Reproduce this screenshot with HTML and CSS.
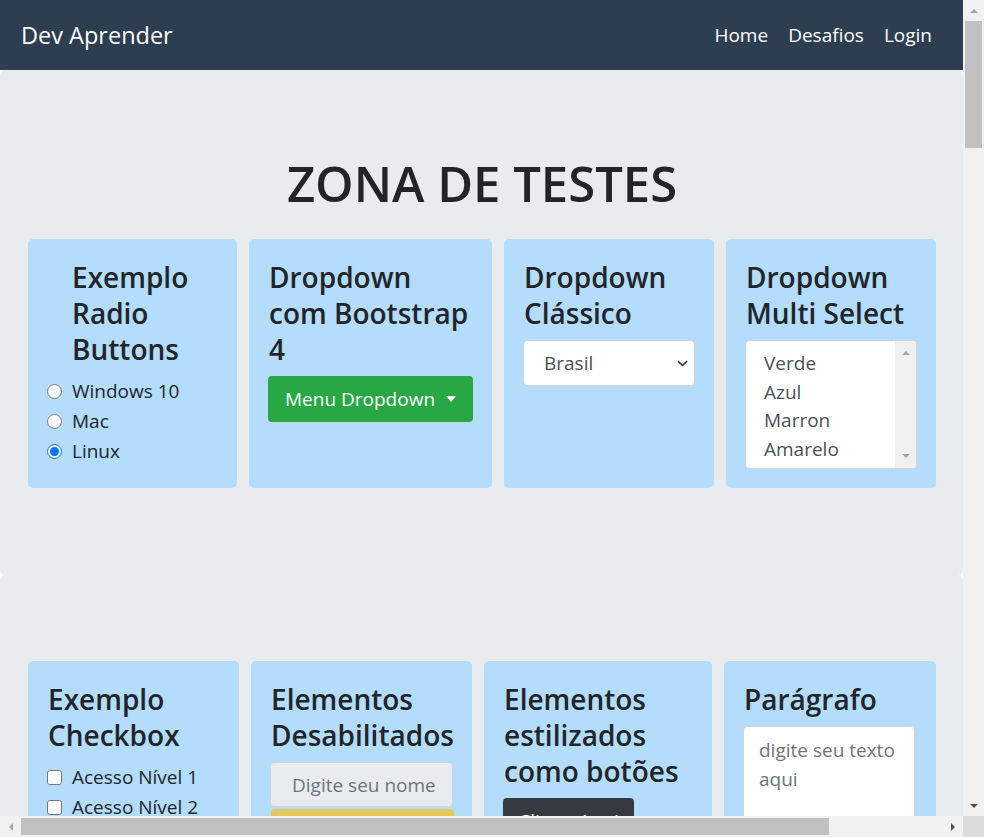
FILE: index.html
```html
<!DOCTYPE html>
<html lang="pt-BR">
<head>
<meta charset="utf-8">
<title>Dev Aprender - Zona de Testes</title>
<link rel="stylesheet" href="styles.css">
</head>
<body>
<div class="frame">
  <div class="viewport">
    <header class="navbar">
      <a class="brand" href="#">Dev Aprender</a>
      <nav class="nav">
        <a href="#">Home</a>
        <a href="#">Desafios</a>
        <a href="#">Login</a>
      </nav>
    </header>

    <section class="band">
      <h1 class="title">ZONA DE TESTES</h1>
      <div class="row row-1">
        <div class="card">
          <h3 class="card-title indent">Exemplo<br>Radio<br>Buttons</h3>
          <label class="check"><input type="radio" name="os"> Windows 10</label>
          <label class="check"><input type="radio" name="os"> Mac</label>
          <label class="check"><input type="radio" name="os" checked> Linux</label>
        </div>
        <div class="card">
          <h3 class="card-title">Dropdown<br>com Bootstrap<br>4</h3>
          <button class="btn btn-success" type="button"><span>Menu Dropdown</span><span class="caret"></span></button>
        </div>
        <div class="card">
          <h3 class="card-title">Dropdown<br>Clássico</h3>
          <div class="select-wrap">
            <select class="select">
              <option>Brasil</option>
              <option>Portugal</option>
              <option>Argentina</option>
            </select>
            <svg class="chev" width="11" height="7" viewBox="0 0 11 7"><path d="M1 1.2 L5.5 5.5 L10 1.2" fill="none" stroke="#333" stroke-width="1.6"/></svg>
          </div>
        </div>
        <div class="card">
          <h3 class="card-title">Dropdown<br>Multi Select</h3>
          <div class="listbox">
            <div class="options">
              <div>Verde</div>
              <div>Azul</div>
              <div>Marron</div>
              <div>Amarelo</div>
            </div>
            <div class="lscroll">
              <span class="tri tri-up light"></span>
              <span class="tri tri-down light"></span>
            </div>
          </div>
        </div>
      </div>
    </section>

    <section class="band">
      <div class="row row-2">
        <div class="card">
          <h3 class="card-title">Exemplo<br>Checkbox</h3>
          <label class="check"><input type="checkbox"> Acesso Nível 1</label>
          <label class="check"><input type="checkbox"> Acesso Nível 2</label>
          <label class="check"><input type="checkbox"> Acesso Nível 3</label>
        </div>
        <div class="card">
          <h3 class="card-title">Elementos<br>Desabilitados</h3>
          <input class="field" type="text" placeholder="Digite seu nome" disabled>
          <button class="btn btn-warning" type="button" disabled>Enviar</button>
        </div>
        <div class="card">
          <h3 class="card-title">Elementos<br>estilizados<br>como botões</h3>
          <a class="btn btn-dark" href="#">Clique Aqui</a>
        </div>
        <div class="card">
          <h3 class="card-title">Parágrafo</h3>
          <textarea class="area" placeholder="digite seu texto aqui"></textarea>
        </div>
      </div>
    </section>
  </div>

  <div class="vscroll">
    <div class="arr"><span class="tri tri-up light"></span></div>
    <div class="vthumb"></div>
    <div class="vspace"></div>
    <div class="arr"><span class="tri tri-down"></span></div>
  </div>
  <div class="hscroll">
    <div class="arr"><span class="tri tri-left light"></span></div>
    <div class="hthumb"></div>
    <div class="hspace"></div>
    <div class="arr"><span class="tri tri-right"></span></div>
  </div>
  <div class="corner"></div>
</div>
</body>
</html>
```

FILE: styles.css
```css
html, body {
  margin: 0;
  height: 100%;
}

body {
  font-family: "Open Sans", "Liberation Sans", sans-serif;
  font-size: 19px;
  color: #212529;
  background: #fff;
  overflow: hidden;
}

.frame {
  display: grid;
  grid-template-columns: 1fr 21px;
  grid-template-rows: 1fr 21px;
  height: 100vh;
}

.viewport {
  overflow: hidden;
  min-width: 0;
  min-height: 0;
}

/* navbar */
.navbar {
  height: 70px;
  background: #2c3e50;
  display: flex;
  align-items: center;
  justify-content: space-between;
  padding: 0 21px 0 21px;
}

.brand {
  color: #fff;
  font-size: 23.5px;
  text-decoration: none;
}

.nav {
  display: flex;
}

.nav a {
  color: #fff;
  text-decoration: none;
  padding: 0 10px;
  font-size: 19px;
}

/* bands */
.band {
  background: #e9ecef;
  border-radius: 5px;
  padding: 86px 27px 87px 28px;
}

.title {
  margin: 0 0 28px;
  font-size: 49px;
  line-height: 55px;
  font-weight: 600;
  text-align: center;
}

.row {
  display: grid;
  gap: 12px;
  align-items: stretch;
}

.row-1 {
  grid-template-columns: 209px 243px 210px 210px;
}

.row-2 {
  grid-template-columns: 211px 221px 228px 212px;
}

.card {
  background: #b3dcfd;
  border-radius: 5px;
  padding: 20px 20px 19px;
}

.card-title {
  margin: 0 0 9px;
  font-size: 28px;
  line-height: 36px;
  font-weight: 600;
  white-space: nowrap;
}

.card-title.indent {
  padding-left: 24px;
}

.check {
  display: flex;
  align-items: center;
  gap: 10px;
  line-height: 30px;
}

.check input {
  margin: 0 0 0 -1px;
  width: 15px;
  height: 15px;
}

/* buttons */
.btn {
  display: inline-flex;
  align-items: center;
  justify-content: center;
  height: 46px;
  border: 0;
  border-radius: 4px;
  font-family: inherit;
  font-size: 19px;
  text-decoration: none;
  white-space: nowrap;
  box-sizing: border-box;
}

.btn-success {
  background: #28a745;
  color: #fff;
  padding: 0 17px;
  margin-left: -1px;
}

.caret {
  display: inline-block;
  margin-left: 11px;
  border-top: 6px solid #fff;
  border-left: 5.5px solid transparent;
  border-right: 5.5px solid transparent;
}

.btn-warning {
  display: flex;
  width: 183px;
  margin-top: 2px;
  background: #e5c85c;
  color: #212529;
}

.btn-dark {
  width: 131px;
  margin-left: -1px;
  background: #343a40;
  color: #fff;
}

/* select */
.select-wrap {
  position: relative;
  width: 172px;
  margin-left: -1px;
}

.select {
  appearance: none;
  -webkit-appearance: none;
  display: block;
  width: 100%;
  height: 46px;
  margin: 0;
  padding: 0 20px;
  border: 1px solid #ced4da;
  border-radius: 4px;
  background: #fff;
  color: #495057;
  font-family: inherit;
  font-size: 19px;
}

.chev {
  position: absolute;
  right: 7px;
  top: 20px;
  pointer-events: none;
}

/* listbox */
.listbox {
  display: flex;
  width: 172px;
  height: 129px;
  margin-left: -1px;
  box-sizing: border-box;
  border: 1px solid #ced4da;
  border-radius: 4px;
  background: #fff;
  overflow: hidden;
}

.options {
  flex: 1;
  padding: 8px 0 0 18px;
  color: #495057;
  line-height: 28.5px;
}

.lscroll {
  width: 21px;
  background: #f0f0f0;
  display: flex;
  flex-direction: column;
  justify-content: space-between;
  align-items: center;
  padding: 10px 0;
}

/* fields */
.field {
  display: block;
  width: 183px;
  height: 45px;
  box-sizing: border-box;
  margin: 0 0 0 -1px;
  padding: 0 2px 0 21px;
  border: 1px solid #ced4da;
  border-radius: 4px;
  background: #e9ecef;
  font-family: inherit;
  font-size: 19px;
}

.field::placeholder,
.area::placeholder {
  color: #6c757d;
}

.area {
  display: block;
  width: 172px;
  height: 130px;
  box-sizing: border-box;
  margin: 0 0 0 -1px;
  padding: 9px 15px;
  border: 1px solid #ced4da;
  border-radius: 4px;
  background: #fff;
  font-family: inherit;
  font-size: 19px;
  line-height: 29px;
  resize: none;
}

/* fake window scrollbars */
.vscroll {
  grid-column: 2;
  grid-row: 1;
  background: #f1f1f1;
  display: flex;
  flex-direction: column;
}

.vscroll .arr {
  height: 21px;
  display: flex;
  align-items: center;
  justify-content: center;
}

.vthumb {
  height: 127px;
  margin: 0 2px;
  background: #c1c1c1;
}

.vspace,
.hspace {
  flex: 1;
}

.hscroll {
  grid-column: 1;
  grid-row: 2;
  background: #f1f1f1;
  display: flex;
}

.hscroll .arr {
  width: 21px;
  display: flex;
  align-items: center;
  justify-content: center;
}

.hthumb {
  width: 808px;
  margin: 2px 0;
  background: #c1c1c1;
}

.corner {
  grid-column: 2;
  grid-row: 2;
  background: #dcdcdc;
}

.tri {
  display: block;
  width: 0;
  height: 0;
}

.tri-up {
  border-left: 4px solid transparent;
  border-right: 4px solid transparent;
  border-bottom: 4px solid #505050;
}

.tri-down {
  border-left: 4px solid transparent;
  border-right: 4px solid transparent;
  border-top: 4px solid #505050;
}

.tri-left {
  border-top: 4px solid transparent;
  border-bottom: 4px solid transparent;
  border-right: 4px solid #505050;
}

.tri-right {
  border-top: 4px solid transparent;
  border-bottom: 4px solid transparent;
  border-left: 4px solid #505050;
}

.tri-up.light { border-bottom-color: #a3a3a3; }
.tri-down.light { border-top-color: #a3a3a3; }
.tri-left.light { border-right-color: #a3a3a3; }
```
